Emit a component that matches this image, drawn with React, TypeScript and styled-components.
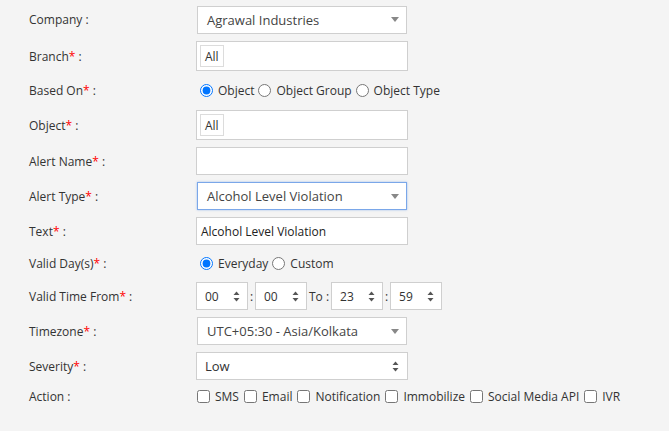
import React, { useState } from 'react';
import styled, { createGlobalStyle } from 'styled-components';

const GlobalStyle = createGlobalStyle`
  html, body {
    margin: 0;
    padding: 0;
    background-color: #f4f4f4;
  }
  body {
    font-family: "Open Sans", "Noto Sans", sans-serif;
    color: #333;
  }
`;

const Form = styled.form`
  display: flex;
  flex-direction: column;
  gap: 7px;
  padding: 5px 0 0 29px;
`;

const Row = styled.div<{ $h: number }>`
  display: flex;
  align-items: center;
  height: ${props => props.$h}px;
`;

const Label = styled.label`
  width: 167px;
  flex-shrink: 0;
  font-size: 12px;
  color: #333;
`;

const Star = styled.span`
  color: #ff0000;
`;

const Field = styled.div`
  display: flex;
  align-items: center;
`;

const SelectBox = styled.div<{ $focus?: boolean }>`
  box-sizing: border-box;
  width: 210px;
  height: 28px;
  margin-left: 1px;
  display: flex;
  align-items: center;
  justify-content: space-between;
  padding: 0 7px 0 9px;
  background: #fff;
  border: 1px solid ${props => props.$focus ? '#7aa7e9' : '#cfcfcf'};
  box-shadow: ${props => props.$focus ? '0 0 2px rgba(80, 140, 230, 0.5)' : 'none'};
  font-size: 13px;
  color: #444;
`;

const Caret = styled.span`
  width: 0;
  height: 0;
  border-left: 4px solid transparent;
  border-right: 4px solid transparent;
  border-top: 5px solid #888;
`;

const TextBox = styled.div`
  box-sizing: border-box;
  width: 212px;
  height: 28px;
  display: flex;
  align-items: center;
  padding: 0 4px;
  background: #fff;
  border: 1px solid #cfcfcf;
  font-size: 12px;
  color: #222;
`;

const NativeSelect = styled(TextBox)`
  justify-content: space-between;
  padding: 0 8px 0 8px;
  font-size: 13px;
  color: #333;
`;

const TagBox = styled(TextBox)`
  height: 30px;
  padding: 0 3px;
`;

const Tag = styled.span`
  display: inline-flex;
  align-items: center;
  height: 20px;
  padding: 0 4px;
  border: 1px solid #dcdcdc;
  font-size: 12px;
  color: #333;
`;

const Choice = styled.label`
  display: inline-flex;
  align-items: center;
  font-size: 12px;
  color: #333;

  input {
    margin: 0 5px 0 4px;
    width: 13px;
    height: 13px;
  }
`;

const CheckChoice = styled(Choice)`
  margin-right: 4px;

  input {
    margin: 0 5px 0 1px;
  }
`;

const SpinBox = styled.div`
  box-sizing: border-box;
  width: 52px;
  height: 28px;
  display: flex;
  align-items: center;
  justify-content: space-between;
  padding: 0 7px 0 8px;
  background: #fff;
  border: 1px solid #cfcfcf;
  font-size: 12px;
  color: #333;
`;

const Sep = styled.span`
  font-size: 12px;
  color: #333;
  padding: 0 2px 0 2px;
  width: 3px;
  text-align: center;
`;

const ToText = styled.span`
  font-size: 12px;
  color: #333;
  margin: 0 2px 0 2px;
`;

const SpinIcon = () => (
  <svg width="7" height="11" viewBox="0 0 7 11">
    <path d="M3.5 0.5 L6.5 4 L0.5 4 Z" fill="#555" />
    <path d="M3.5 10.5 L6.5 7 L0.5 7 Z" fill="#555" />
  </svg>
);

const actions = ['SMS', 'Email', 'Notification', 'Immobilize', 'Social Media API', 'IVR'];

const App = () => {
  const [basedOn, setBasedOn] = useState('object');
  const [validDay, setValidDay] = useState('everyday');

  return (
    <>
      <GlobalStyle />
      <Form>
        <Row $h={29}>
          <Label>Company :</Label>
          <SelectBox>Agrawal Industries<Caret /></SelectBox>
        </Row>
        <Row $h={30}>
          <Label>Branch<Star>*</Star> :</Label>
          <TagBox><Tag>All</Tag></TagBox>
        </Row>
        <Row $h={25}>
          <Label>Based On<Star>*</Star> :</Label>
          <Field>
            {[['object', 'Object'], ['group', 'Object Group'], ['type', 'Object Type']].map(([v, t]) => (
              <Choice key={v}>
                <input type="radio" name="basedOn" checked={basedOn === v} onChange={() => setBasedOn(v)} />
                {t}
              </Choice>
            ))}
          </Field>
        </Row>
        <Row $h={30}>
          <Label>Object<Star>*</Star> :</Label>
          <TagBox><Tag>All</Tag></TagBox>
        </Row>
        <Row $h={28}>
          <Label>Alert Name<Star>*</Star> :</Label>
          <TextBox />
        </Row>
        <Row $h={28}>
          <Label>Alert Type<Star>*</Star> :</Label>
          <SelectBox $focus>Alcohol Level Violation<Caret /></SelectBox>
        </Row>
        <Row $h={28}>
          <Label>Text<Star>*</Star> :</Label>
          <TextBox>Alcohol Level Violation</TextBox>
        </Row>
        <Row $h={23}>
          <Label>Valid Day(s)<Star>*</Star> :</Label>
          <Field>
            {[['everyday', 'Everyday'], ['custom', 'Custom']].map(([v, t]) => (
              <Choice key={v}>
                <input type="radio" name="validDay" checked={validDay === v} onChange={() => setValidDay(v)} />
                {t}
              </Choice>
            ))}
          </Field>
        </Row>
        <Row $h={28}>
          <Label>Valid Time From<Star>*</Star> :</Label>
          <Field>
            <SpinBox>00<SpinIcon /></SpinBox>
            <Sep>:</Sep>
            <SpinBox>00<SpinIcon /></SpinBox>
            <ToText>To :</ToText>
            <SpinBox>23<SpinIcon /></SpinBox>
            <Sep>:</Sep>
            <SpinBox>59<SpinIcon /></SpinBox>
          </Field>
        </Row>
        <Row $h={28}>
          <Label>Timezone<Star>*</Star> :</Label>
          <SelectBox>UTC+05:30 - Asia/Kolkata<Caret /></SelectBox>
        </Row>
        <Row $h={28}>
          <Label>Severity<Star>*</Star> :</Label>
          <NativeSelect>Low<SpinIcon /></NativeSelect>
        </Row>
        <Row $h={18}>
          <Label>Action :</Label>
          <Field>
            {actions.map(a => (
              <CheckChoice key={a}>
                <input type="checkbox" />
                {a}
              </CheckChoice>
            ))}
          </Field>
        </Row>
      </Form>
    </>
  );
};

export default App;
